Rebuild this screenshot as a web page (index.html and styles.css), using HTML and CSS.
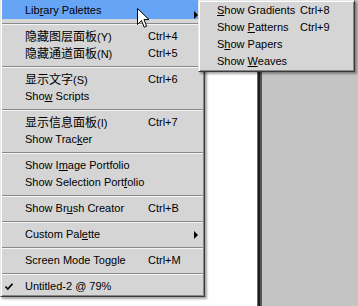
FILE: index.html
```html
<!DOCTYPE html>
<html>
<head>
<meta charset="utf-8">
<link rel="stylesheet" href="styles.css">
</head>
<body>
<div class="desktop">
  <div class="canvas"></div>
  <div class="frame"></div>
  <div class="workspace"></div>
</div>

<div class="menu main-menu">
  <div class="item first active"><span class="mark"></span><span class="label">Lib<u>r</u>ary Palettes</span><span class="arrow"></span></div>
  <div class="sep"></div>
  <div class="item"><span class="mark"></span><span class="label"><span class="cjk">隐藏图层面板</span>(Y)</span><span class="key">Ctrl+4</span></div>
  <div class="item"><span class="mark"></span><span class="label"><span class="cjk">隐藏通道面板</span>(N)</span><span class="key">Ctrl+5</span></div>
  <div class="sep"></div>
  <div class="item"><span class="mark"></span><span class="label"><span class="cjk">显示文字</span>(S)</span><span class="key">Ctrl+6</span></div>
  <div class="item"><span class="mark"></span><span class="label">Sho<u>w</u> Scripts</span></div>
  <div class="sep"></div>
  <div class="item"><span class="mark"></span><span class="label"><span class="cjk">显示信息面板</span>(I)</span><span class="key">Ctrl+7</span></div>
  <div class="item"><span class="mark"></span><span class="label">Show Trac<u>k</u>er</span></div>
  <div class="sep"></div>
  <div class="item"><span class="mark"></span><span class="label">Show I<u>m</u>age Portfolio</span></div>
  <div class="item"><span class="mark"></span><span class="label">Show Selection Port<u>f</u>olio</span></div>
  <div class="sep"></div>
  <div class="item"><span class="mark"></span><span class="label">Show Br<u>u</u>sh Creator</span><span class="key">Ctrl+B</span></div>
  <div class="sep"></div>
  <div class="item"><span class="mark"></span><span class="label">Custom Pal<u>e</u>tte</span><span class="arrow"></span></div>
  <div class="sep"></div>
  <div class="item"><span class="mark"></span><span class="label">Screen Mode To<u>g</u>gle</span><span class="key">Ctrl+M</span></div>
  <div class="sep"></div>
  <div class="item"><span class="mark"><svg width="8" height="8" viewBox="0 0 8 8"><path d="M0.5 3.5 L2.8 6 L7.5 0.8" fill="none" stroke="#000" stroke-width="1.6"/></svg></span><span class="label">Untitled-2 @ 79%</span></div>
</div>

<div class="menu sub-menu">
  <div class="item"><span class="label"><u>S</u>how Gradients</span><span class="key">Ctrl+8</span></div>
  <div class="item"><span class="label">Show <u>P</u>atterns</span><span class="key">Ctrl+9</span></div>
  <div class="item"><span class="label">S<u>h</u>ow Papers</span></div>
  <div class="item"><span class="label">Show <u>W</u>eaves</span></div>
</div>

<svg class="cursor" width="13" height="21" viewBox="0 0 13 21"><path d="M0.5 0.5 L0.5 16.5 L4.5 12.5 L7.2 19.2 L9.6 18.2 L7 11.6 L12 11.6 Z" fill="#fff" stroke="#000" stroke-width="1" stroke-linejoin="miter"/></svg>
</body>
</html>
```

FILE: styles.css
```css
html, body {
  margin: 0;
  padding: 0;
}
body {
  width: 358px;
  height: 306px;
  overflow: hidden;
  position: relative;
  background: #fff;
  font-family: "Liberation Sans", Arial, "Noto Sans CJK SC", sans-serif;
  font-size: 11px;
  color: #000;
}
.desktop {
  display: flex;
  height: 306px;
}
.canvas {
  width: 257px;
  background: #fff;
}
.frame {
  width: 2px;
  background: #1e1e1e;
  border-left: 1px solid #6a6a6a;
  border-right: 2px solid #555;
}
.workspace {
  flex: 1;
  background: #c4c4c4;
}
.menu {
  position: absolute;
  box-sizing: border-box;
  background: #d5d5d5;
  border: 1px solid;
  border-color: #e6e6e6 #3a3a3a #3a3a3a #e6e6e6;
  box-shadow: inset 1px 1px 0 #fff, inset -1px -1px 0 #888, 2px 2px 2px rgba(0,0,0,0.35);
  padding: 0 1px 1px 1px;
}
.main-menu {
  left: 0;
  top: -1px;
  width: 205px;
}
.sub-menu {
  left: 198px;
  top: 0;
  width: 157px;
  padding-top: 1px;
}
.item {
  display: flex;
  align-items: center;
  height: 17px;
  line-height: 17px;
  white-space: nowrap;
}
.item.first {
  height: 19px;
  align-items: flex-end;
}
.item.active {
  background: #66a4f6;
}
.mark {
  width: 23px;
  flex: none;
  display: flex;
  align-items: center;
  padding-left: 3px;
  box-sizing: border-box;
}
.main-menu .label {
  width: 123px;
  flex: none;
}
.sub-menu .label {
  width: 83px;
  flex: none;
  padding-left: 17px;
}
.cjk {
  font-family: "Noto Sans CJK SC", sans-serif;
  font-size: 12px;
}
u {
  text-decoration: underline;
  text-underline-offset: 1px;
}
.arrow {
  margin-left: auto;
  margin-right: 5px;
  width: 0;
  height: 0;
  border-top: 4px solid transparent;
  border-bottom: 4px solid transparent;
  border-left: 4px solid #000;
}
.sep {
  margin: 4px 0 3px;
  border-top: 1px solid #8a8a8a;
  border-bottom: 1px solid #f4f4f4;
}
.cursor {
  position: absolute;
  left: 137px;
  top: 8px;
}
```
